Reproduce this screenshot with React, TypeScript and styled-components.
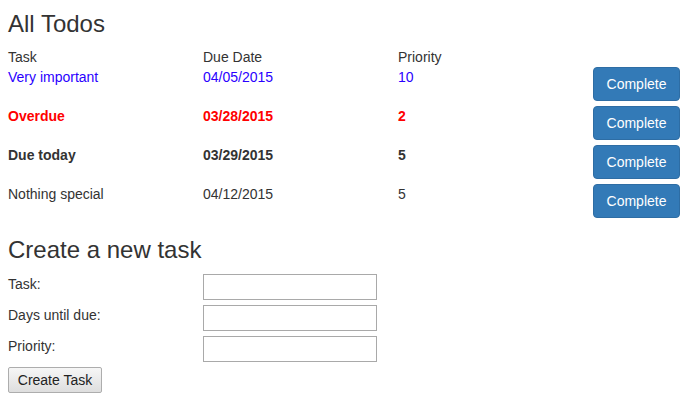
import React from "react";
import styled, { createGlobalStyle } from "styled-components";

const Global = createGlobalStyle`
  html, body { margin: 0; padding: 0; background: #fff; }
  body {
    font-family: "Liberation Sans", Arial, Helvetica, sans-serif;
    font-size: 14px;
    line-height: 20px;
    color: #333;
  }
`;

const Page = styled.div`
  padding: 0 8px;
`;

const Heading = styled.h3<{ $top: number }>`
  font-size: 24px;
  font-weight: 500;
  line-height: 26.4px;
  margin: ${(p) => p.$top}px 0 10px;
`;

const Table = styled.div`
  display: grid;
  grid-template-columns: 195px 195px 195px 87px;
  row-gap: 5px;
`;

const HeaderRow = styled.div`
  display: contents;
`;

const HeaderCell = styled.div`
  height: 20px;
  margin-bottom: -5px;
`;

type Tone = "blue" | "red" | "bold" | "plain";

const Cell = styled.div<{ $tone: Tone }>`
  height: 34px;
  color: ${(p) => (p.$tone === "blue" ? "#2a00ff" : p.$tone === "red" ? "#ff0000" : "#333")};
  font-weight: ${(p) => (p.$tone === "red" || p.$tone === "bold" ? 700 : 400)};
`;

const PrimaryButton = styled.button`
  box-sizing: border-box;
  width: 87px;
  height: 34px;
  padding: 6px 0;
  font-family: inherit;
  font-size: 14px;
  line-height: 20px;
  color: #fff;
  background: #337ab7;
  border: 1px solid #2e6da4;
  border-radius: 4px;
  cursor: pointer;
`;

const Form = styled.div`
  display: grid;
  grid-template-columns: 195px 174px;
  row-gap: 5px;
`;

const Label = styled.label`
  height: 26px;
  line-height: 20px;
`;

const Input = styled.input`
  box-sizing: border-box;
  width: 174px;
  height: 26px;
  border: 1px solid #a9a9a9;
  border-radius: 0;
  padding: 1px 2px;
  font-family: inherit;
  font-size: 14px;
  outline: none;
`;

const DefaultButton = styled.button`
  box-sizing: border-box;
  width: 94px;
  height: 26px;
  margin-top: 5px;
  padding: 0;
  font-family: inherit;
  font-size: 14px;
  color: #222;
  background: linear-gradient(#f6f6f6, #dedede);
  border: 1px solid #adadad;
  border-radius: 2px;
`;

const todos: { task: string; due: string; priority: string; tone: Tone }[] = [
  { task: "Very important", due: "04/05/2015", priority: "10", tone: "blue" },
  { task: "Overdue", due: "03/28/2015", priority: "2", tone: "red" },
  { task: "Due today", due: "03/29/2015", priority: "5", tone: "bold" },
  { task: "Nothing special", due: "04/12/2015", priority: "5", tone: "plain" },
];

export default function App() {
  return (
    <Page>
      <Global />
      <Heading $top={11}>All Todos</Heading>
      <Table>
        <HeaderRow>
          <HeaderCell>Task</HeaderCell>
          <HeaderCell>Due Date</HeaderCell>
          <HeaderCell>Priority</HeaderCell>
          <HeaderCell />
        </HeaderRow>
        {todos.map((t) => (
          <React.Fragment key={t.task}>
            <Cell $tone={t.tone}>{t.task}</Cell>
            <Cell $tone={t.tone}>{t.due}</Cell>
            <Cell $tone={t.tone}>{t.priority}</Cell>
            <PrimaryButton>Complete</PrimaryButton>
          </React.Fragment>
        ))}
      </Table>
      <Heading $top={19}>Create a new task</Heading>
      <Form>
        <Label>Task:</Label>
        <Input type="text" />
        <Label>Days until due:</Label>
        <Input type="text" />
        <Label>Priority:</Label>
        <Input type="text" />
      </Form>
      <DefaultButton>Create Task</DefaultButton>
    </Page>
  );
}
